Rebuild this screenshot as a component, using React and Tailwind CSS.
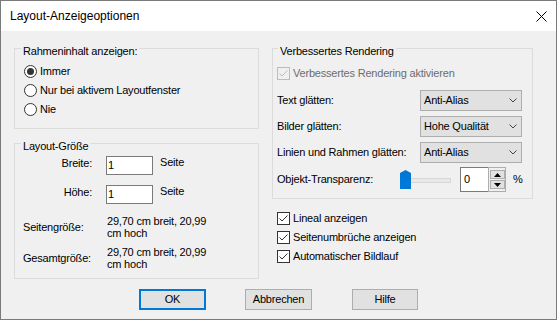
import React from "react";

/**
 * Layout-Anzeigeoptionen dialog (Windows 10 look)
 */

function Radio({ checked, label }) {
    return (
        <div className="flex h-[19px] items-center pl-[9px]">
            <svg width="13" height="13" viewBox="0 0 13 13">
                <circle cx="6.5" cy="6.5" r="6" fill="#fff" stroke="#333" />
                {checked && <circle cx="6.5" cy="6.5" r="3.5" fill="#333" />}
            </svg>
            <span className="ml-[3px]">{label}</span>
        </div>
    );
}

function CheckBox({ label, disabled }) {
    const stroke = disabled ? "#bcbcbc" : "#333";
    return (
        <div className="flex h-[19px] items-center">
            <svg width="13" height="13" viewBox="0 0 13 13">
                <rect
                    x="0.5"
                    y="0.5"
                    width="12"
                    height="12"
                    fill={disabled ? "#f0f0f0" : "#fff"}
                    stroke={stroke}
                />
                <polyline
                    points="2.5,6.5 5,9 10.5,3.5"
                    fill="none"
                    stroke={stroke}
                    strokeWidth="1"
                />
            </svg>
            <span
                className={`ml-[3px] ${disabled ? "text-[#6d6d6d]" : "text-black"}`}
            >
                {label}
            </span>
        </div>
    );
}

function GroupLabel({ children, offset }) {
    // sits on the top border line of the group box
    return (
        <div
            className={`-mt-[4px] ${offset} w-fit bg-[#f0f0f0] px-[2px] leading-[13px]`}
        >
            {children}
        </div>
    );
}

function Dropdown({ value }) {
    return (
        <div className="flex h-[21px] w-[102px] items-center justify-between border border-[#adadad] bg-[#e1e1e1] pl-[3px] pr-[4px]">
            <span>{value}</span>
            <svg width="8" height="5" viewBox="0 0 8 5">
                <polyline points="0.5,0.5 4,4 7.5,0.5" fill="none" stroke="#444" />
            </svg>
        </div>
    );
}

function DropdownRow({ label, value }) {
    return (
        <div className="flex h-[21px] items-center pl-[4px]">
            <span className="w-[143px]">{label}</span>
            <Dropdown value={value} />
        </div>
    );
}

function Slider() {
    return (
        <svg width="56" height="25" viewBox="0 0 56 25">
            <rect x="4.5" y="11.5" width="48" height="4" fill="#e7eae7" stroke="#d6d6d6" />
            <path d="M2 22 L2 6 L7.5 3 L13 6 L13 22 Z" fill="#0078d7" />
        </svg>
    );
}

function SpinBox() {
    return (
        <div className="flex h-[25px]">
            <div className="flex w-[28px] items-center border border-r-0 border-[#7a7a7a] bg-white pl-[3px]">
                0
            </div>
            <div className="flex w-[18px] flex-col items-center justify-center gap-[1px] border border-[#adadad] bg-[#f0f0f0]">
                <div className="flex h-[9px] w-[15px] items-center justify-center border border-[#adadad] bg-[#e1e1e1]">
                    <svg width="7" height="4" viewBox="0 0 7 4">
                        <path d="M0 4 L3.5 0 L7 4 Z" fill="#000" />
                    </svg>
                </div>
                <div className="flex h-[9px] w-[15px] items-center justify-center border border-[#adadad] bg-[#e1e1e1]">
                    <svg width="7" height="4" viewBox="0 0 7 4">
                        <path d="M0 0 L3.5 4 L7 0 Z" fill="#000" />
                    </svg>
                </div>
            </div>
        </div>
    );
}

function SizeInput({ label }) {
    return (
        <div className="flex h-[19px] items-start">
            <span className="mt-[1px] w-[77px] text-right leading-[13px]">{label}</span>
            <div className="ml-[14px] flex h-[19px] w-[47px] items-center border border-[#7a7a7a] bg-white pl-[1px]">
                1
            </div>
            <span className="ml-[7px] leading-[13px]">Seite</span>
        </div>
    );
}

function SizeInfo({ label, className }) {
    return (
        <div className={`flex items-center ${className}`}>
            <span className="ml-[8px] w-[84px]">{label}</span>
            <div className="leading-[12px]">
                29,70 cm breit, 20,99
                <br />
                cm hoch
            </div>
        </div>
    );
}

function DialogButton({ children, primary, className }) {
    return (
        <div
            className={`flex h-[21px] items-center justify-center bg-[#e1e1e1] ${
                primary ? "border-2 border-[#0078d7]" : "border border-[#adadad]"
            } ${className}`}
        >
            {children}
        </div>
    );
}

export default function App() {
    return (
        <div className="flex h-[320px] w-[557px] flex-col border border-[#7a7a7a] bg-[#f0f0f0] font-['Liberation_Sans',Arial,sans-serif] text-[11px] tracking-[-0.2px] text-black">
            {/* Title bar */}
            <div className="flex h-[30px] shrink-0 items-center justify-between bg-white pl-[9px] pr-[9px]">
                <span className="text-[12px] tracking-normal">Layout-Anzeigeoptionen</span>
                <svg width="11" height="11" viewBox="0 0 11 11">
                    <path d="M0.5 0.5 L10.5 10.5 M10.5 0.5 L0.5 10.5" stroke="#000" strokeWidth="1" />
                </svg>
            </div>

            {/* Body */}
            <div className="flex pl-[13px] pt-[17px]">
                {/* Left column */}
                <div className="flex w-[245px] flex-col">
                    <div className="h-[81px] border border-[#dcdcdc]">
                        <GroupLabel offset="ml-[6px]">Rahmeninhalt anzeigen:</GroupLabel>
                        <div className="mt-[4px] flex flex-col">
                            <Radio checked label="Immer" />
                            <Radio label="Nur bei aktivem Layoutfenster" />
                            <Radio label="Nie" />
                        </div>
                    </div>

                    <div className="mt-[14px] h-[136px] border border-[#dcdcdc]">
                        <GroupLabel offset="ml-[6px]">Layout-Größe</GroupLabel>
                        <div className="mt-[3px] flex flex-col">
                            <SizeInput label="Breite:" />
                            <div className="mt-[10px]">
                                <SizeInput label="Höhe:" />
                            </div>
                            <SizeInfo label="Seitengröße:" className="mt-[11px]" />
                            <SizeInfo label="Gesamtgröße:" className="mt-[7px]" />
                        </div>
                    </div>
                </div>

                {/* Right column */}
                <div className="ml-[13px] flex w-[261px] flex-col">
                    <div className="h-[151px] border border-[#dcdcdc]">
                        <GroupLabel offset="ml-[5px]">Verbessertes Rendering</GroupLabel>
                        <div className="mt-[6px] pl-[4px]">
                            <CheckBox disabled label="Verbessertes Rendering aktivieren" />
                        </div>
                        <div className="mt-[7px] flex flex-col gap-[5px]">
                            <DropdownRow label="Text glätten:" value="Anti-Alias" />
                            <DropdownRow label="Bilder glätten:" value="Hohe Qualität" />
                            <DropdownRow label="Linien und Rahmen glätten:" value="Anti-Alias" />
                        </div>
                        <div className="mt-[4px] flex h-[25px] items-center pl-[4px]">
                            <span className="w-[121px]">Objekt-Transparenz:</span>
                            <Slider />
                            <div className="ml-[6px]">
                                <SpinBox />
                            </div>
                            <span className="ml-[7px]">%</span>
                        </div>
                    </div>

                    <div className="mt-[10px] flex flex-col pl-[5px]">
                        <CheckBox label="Lineal anzeigen" />
                        <CheckBox label="Seitenumbrüche anzeigen" />
                        <CheckBox label="Automatischer Bildlauf" />
                    </div>
                </div>
            </div>

            {/* Buttons */}
            <div className="mt-[10px] flex pl-[138px]">
                <DialogButton primary className="w-[67px]">OK</DialogButton>
                <DialogButton className="ml-[39px] w-[67px]">Abbrechen</DialogButton>
                <DialogButton className="ml-[40px] w-[66px]">Hilfe</DialogButton>
            </div>
        </div>
    );
}
